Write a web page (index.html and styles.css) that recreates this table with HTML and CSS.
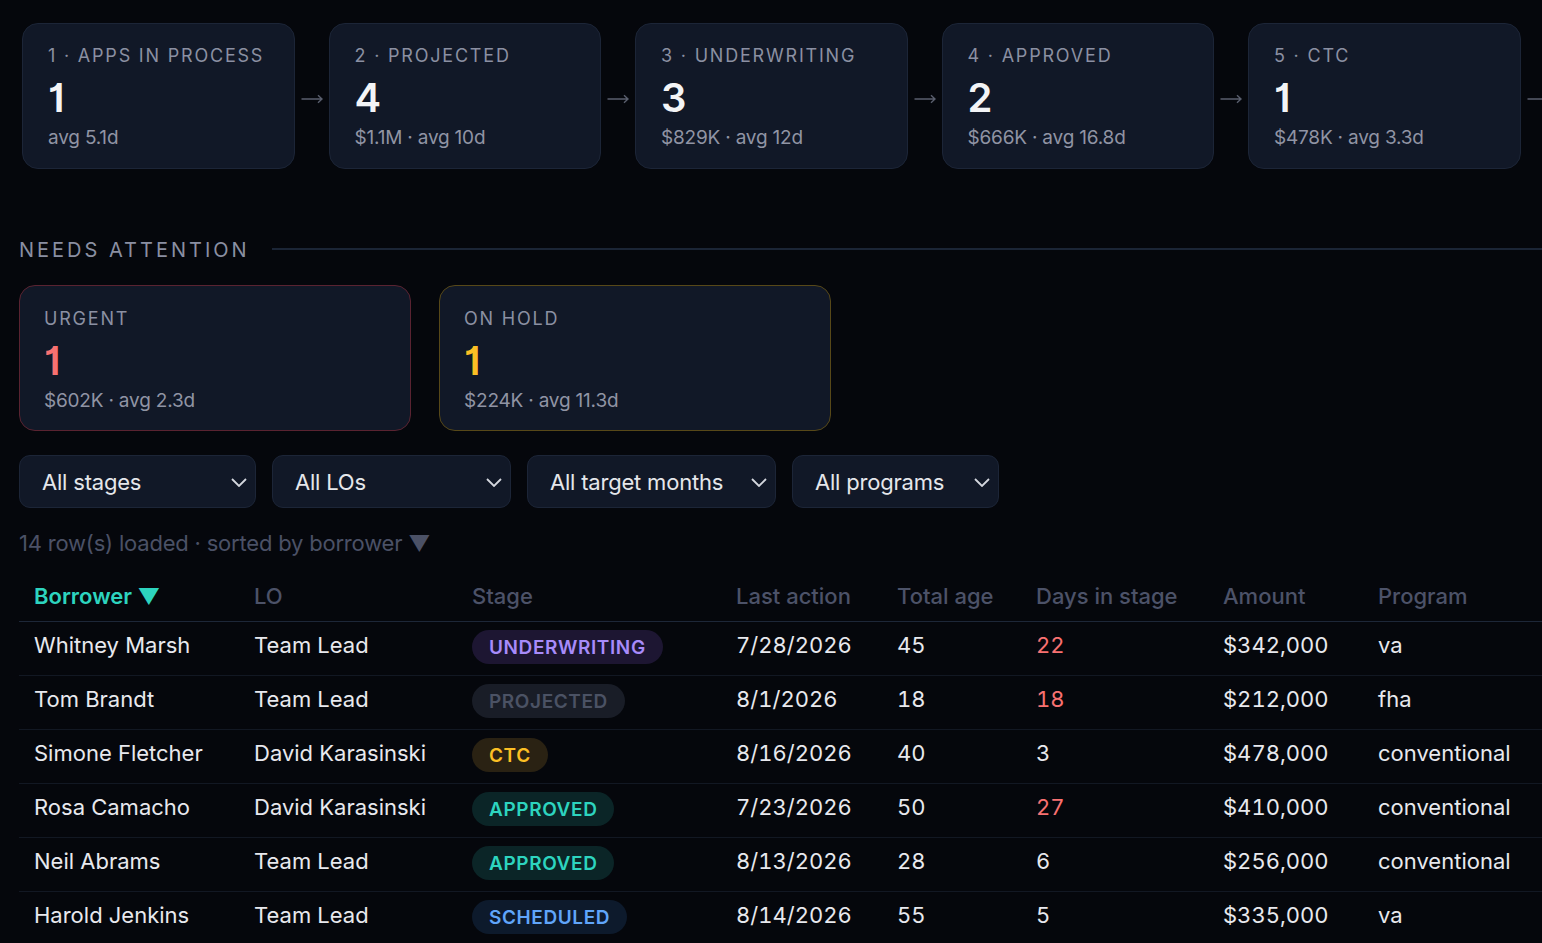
FILE: index.html
```html
<!DOCTYPE html>
<html lang="en">
<head>
<meta charset="utf-8">
<title>Pipeline</title>
<link rel="stylesheet" href="styles.css">
</head>
<body>
<div class="page">
  <div class="pipeline">
    <div class="card stage-card">
      <div class="card-label">1 · APPS IN PROCESS</div>
      <div class="card-num">1</div>
      <div class="card-sub">avg 5.1d</div>
    </div>
    <div class="arrow"><svg width="22" height="10" viewBox="0 0 22 10"><path d="M0.5 5H21M17 1.2L21 5L17 8.8" fill="none" stroke="#5a5f6e" stroke-width="1.4"/></svg></div>
    <div class="card stage-card">
      <div class="card-label">2 · PROJECTED</div>
      <div class="card-num">4</div>
      <div class="card-sub">$1.1M · avg 10d</div>
    </div>
    <div class="arrow"><svg width="22" height="10" viewBox="0 0 22 10"><path d="M0.5 5H21M17 1.2L21 5L17 8.8" fill="none" stroke="#5a5f6e" stroke-width="1.4"/></svg></div>
    <div class="card stage-card">
      <div class="card-label">3 · UNDERWRITING</div>
      <div class="card-num">3</div>
      <div class="card-sub">$829K · avg 12d</div>
    </div>
    <div class="arrow"><svg width="22" height="10" viewBox="0 0 22 10"><path d="M0.5 5H21M17 1.2L21 5L17 8.8" fill="none" stroke="#5a5f6e" stroke-width="1.4"/></svg></div>
    <div class="card stage-card">
      <div class="card-label">4 · APPROVED</div>
      <div class="card-num">2</div>
      <div class="card-sub">$666K · avg 16.8d</div>
    </div>
    <div class="arrow"><svg width="22" height="10" viewBox="0 0 22 10"><path d="M0.5 5H21M17 1.2L21 5L17 8.8" fill="none" stroke="#5a5f6e" stroke-width="1.4"/></svg></div>
    <div class="card stage-card">
      <div class="card-label">5 · CTC</div>
      <div class="card-num">1</div>
      <div class="card-sub">$478K · avg 3.3d</div>
    </div>
    <div class="arrow"><svg width="22" height="10" viewBox="0 0 22 10"><path d="M0.5 5H21M17 1.2L21 5L17 8.8" fill="none" stroke="#5a5f6e" stroke-width="1.4"/></svg></div>
  </div>

  <div class="section-head">
    <div class="section-title">NEEDS ATTENTION</div>
    <div class="section-line"></div>
  </div>

  <div class="attention">
    <div class="card attn-card attn-urgent">
      <div class="card-label">URGENT</div>
      <div class="card-num num-red">1</div>
      <div class="card-sub">$602K · avg 2.3d</div>
    </div>
    <div class="card attn-card attn-hold">
      <div class="card-label">ON HOLD</div>
      <div class="card-num num-yellow">1</div>
      <div class="card-sub">$224K · avg 11.3d</div>
    </div>
  </div>

  <div class="filters">
    <div class="select select-stages"><span>All stages</span><svg class="chev" width="16" height="9" viewBox="0 0 16 9"><path d="M1 1L8 8L15 1" fill="none" stroke="#d4d7de" stroke-width="1.8"/></svg></div>
    <div class="select select-los"><span>All LOs</span><svg class="chev" width="16" height="9" viewBox="0 0 16 9"><path d="M1 1L8 8L15 1" fill="none" stroke="#d4d7de" stroke-width="1.8"/></svg></div>
    <div class="select select-months"><span>All target months</span><svg class="chev" width="16" height="9" viewBox="0 0 16 9"><path d="M1 1L8 8L15 1" fill="none" stroke="#d4d7de" stroke-width="1.8"/></svg></div>
    <div class="select select-programs"><span>All programs</span><svg class="chev" width="16" height="9" viewBox="0 0 16 9"><path d="M1 1L8 8L15 1" fill="none" stroke="#d4d7de" stroke-width="1.8"/></svg></div>
  </div>

  <div class="meta">14 row(s) loaded · sorted by borrower ▼</div>

  <table class="loans">
    <colgroup>
      <col class="c-borrower"><col class="c-lo"><col class="c-stage"><col class="c-last"><col class="c-age"><col class="c-days"><col class="c-amount"><col class="c-program">
    </colgroup>
    <thead>
      <tr>
        <th class="sorted">Borrower ▼</th>
        <th>LO</th>
        <th>Stage</th>
        <th>Last action</th>
        <th>Total age</th>
        <th>Days in stage</th>
        <th>Amount</th>
        <th>Program</th>
      </tr>
    </thead>
    <tbody>
      <tr>
        <td>Whitney Marsh</td><td>Team Lead</td><td><span class="badge b-underwriting">UNDERWRITING</span></td><td class="num">7/28/2026</td><td class="num">45</td><td class="num late">22</td><td class="num">$342,000</td><td>va</td>
      </tr>
      <tr>
        <td>Tom Brandt</td><td>Team Lead</td><td><span class="badge b-projected">PROJECTED</span></td><td class="num">8/1/2026</td><td class="num">18</td><td class="num late">18</td><td class="num">$212,000</td><td>fha</td>
      </tr>
      <tr>
        <td>Simone Fletcher</td><td>David Karasinski</td><td><span class="badge b-ctc">CTC</span></td><td class="num">8/16/2026</td><td class="num">40</td><td class="num">3</td><td class="num">$478,000</td><td>conventional</td>
      </tr>
      <tr>
        <td>Rosa Camacho</td><td>David Karasinski</td><td><span class="badge b-approved">APPROVED</span></td><td class="num">7/23/2026</td><td class="num">50</td><td class="num late">27</td><td class="num">$410,000</td><td>conventional</td>
      </tr>
      <tr>
        <td>Neil Abrams</td><td>Team Lead</td><td><span class="badge b-approved">APPROVED</span></td><td class="num">8/13/2026</td><td class="num">28</td><td class="num">6</td><td class="num">$256,000</td><td>conventional</td>
      </tr>
      <tr>
        <td>Harold Jenkins</td><td>Team Lead</td><td><span class="badge b-scheduled">SCHEDULED</span></td><td class="num">8/14/2026</td><td class="num">55</td><td class="num">5</td><td class="num">$335,000</td><td>va</td>
      </tr>
    </tbody>
  </table>
</div>
</body>
</html>
```

FILE: styles.css
```css
html, body {
  margin: 0;
  padding: 0;
  background: #05070c;
  overflow: hidden;
}
body {
  font-family: Inter, "Noto Sans", "DejaVu Sans", sans-serif;
  color: #e5e7eb;
  width: 1542px;
  height: 943px;
}
.page {
  padding: 23px 0 0 19px;
}

/* Cards */
.card {
  box-sizing: border-box;
  height: 146px;
  background: #111827;
  border: 1px solid #1c2537;
  border-radius: 16px;
}
.card-label {
  font-size: 18px;
  line-height: 20px;
  letter-spacing: 1.8px;
  color: #8b90a2;
}
.card-num {
  margin-top: 12px;
  font-size: 40px;
  line-height: 40px;
  font-weight: 600;
  color: #f3f4f6;
  font-feature-settings: "cv01" 1;
}
.card-sub {
  margin-top: 8px;
  font-size: 19px;
  line-height: 24px;
  color: #9094a4;
  letter-spacing: -0.2px;
}

.pipeline {
  display: flex;
  align-items: center;
  padding-left: 3px;
  overflow: hidden;
}
.stage-card {
  flex: 0 0 272.5px;
  padding: 22px 24px 0 25px;
}
.arrow {
  flex: 0 0 34px;
  display: flex;
  justify-content: center;
  align-items: center;
  margin-top: 5px;
}

/* Section head */
.section-head {
  display: flex;
  align-items: center;
  gap: 22px;
  margin-top: 69px;
}
.section-title {
  font-size: 20px;
  line-height: 24px;
  letter-spacing: 3px;
  color: #8a8fa2;
}
.section-line {
  flex: 1;
  height: 2px;
  background: #1b2536;
  margin-top: -2px;
}

.attention {
  display: flex;
  gap: 28px;
  margin-top: 23px;
}
.attn-card {
  width: 392px;
  padding: 23px 24px 0 24px;
}
.attn-urgent { border-color: #5a2331; }
.attn-hold { border-color: #574818; }
.num-red { color: #f87171; }
.num-yellow { color: #fbbf24; }

/* Filters */
.filters {
  display: flex;
  gap: 16px;
  margin-top: 24px;
}
.select {
  box-sizing: border-box;
  height: 53px;
  display: flex;
  align-items: center;
  justify-content: space-between;
  padding: 0 8px 0 22px;
  background: #111827;
  border: 1px solid #1c2537;
  border-radius: 11px;
  font-size: 22px;
  color: #e5e7eb;
  letter-spacing: -0.2px;
}
.chev { margin-top: 2px; }
.select-stages { width: 237px; }
.select-los { width: 239px; }
.select-months { width: 249px; }
.select-programs { width: 207px; }

.meta {
  margin-top: 22px;
  font-size: 22px;
  line-height: 26px;
  color: #4b5166;
  letter-spacing: -0.2px;
}

/* Table */
.loans {
  margin-top: 15px;
  border-collapse: collapse;
  table-layout: fixed;
  width: 1523px;
  font-size: 22px;
  line-height: 26px;
}
.c-borrower { width: 220px; }
.c-lo { width: 218px; }
.c-stage { width: 264px; }
.c-last { width: 161px; }
.c-age { width: 139px; }
.c-days { width: 187px; }
.c-amount { width: 155px; }
.c-program { width: 179px; }

.loans th {
  text-align: left;
  font-weight: 500;
  color: #4c5268;
  padding: 12px 15px 12px 15px;
  border-bottom: 1px solid #1d2738;
  white-space: nowrap;
}
.loans th.sorted {
  color: #2dd4bf;
  font-weight: 600;
}
.loans td {
  padding: 10px 15px 17px 15px;
  vertical-align: top;
  color: #e8e9ee;
  border-bottom: 1px solid #121823;
  white-space: nowrap;
}
.loans td.num {
  font-variant-numeric: tabular-nums;
}
.loans td.late { color: #f87171; }

.badge {
  display: inline-block;
  vertical-align: top;
  box-sizing: border-box;
  height: 34px;
  line-height: 34px;
  padding: 1px 17px 0 17px;
  margin: -2px 0 -6px 0;
  border-radius: 17px;
  font-size: 19px;
  font-weight: 600;
  letter-spacing: 0.6px;
}
.b-underwriting { background: #1d1632; color: #a78bfa; }
.b-projected { background: #191d27; color: #4b5264; }
.b-ctc { background: #2a2213; color: #fbbf24; }
.b-approved { background: #0b2527; color: #2dd4bf; }
.b-scheduled { background: #0d1a2c; color: #60a5fa; }
```
